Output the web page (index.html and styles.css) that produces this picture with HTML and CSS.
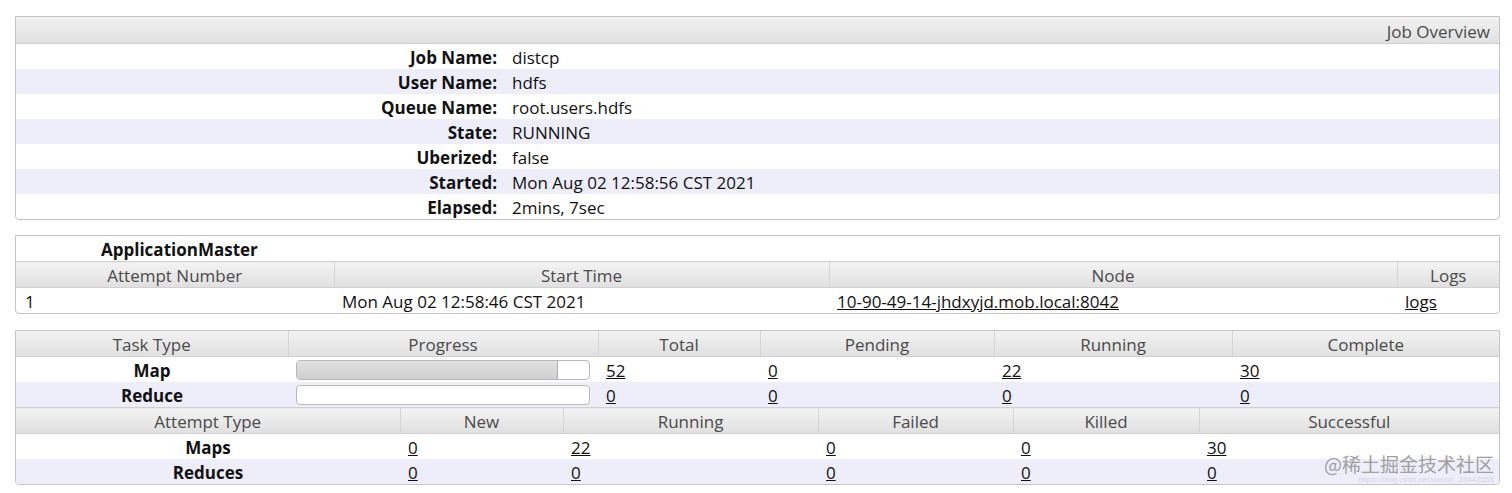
FILE: index.html
```html
<!DOCTYPE html>
<html>
<head>
<meta charset="utf-8">
<link rel="stylesheet" href="styles.css">
</head>
<body>
<div class="page">
  <div class="box first">
    <table class="info">
      <colgroup>
        <col class="i-label"><col class="i-value">
      </colgroup>
      <thead>
        <tr><th colspan="2" class="title">Job Overview</th></tr>
      </thead>
      <tbody>
        <tr><th>Job Name:</th><td>distcp</td></tr>
        <tr class="alt"><th>User Name:</th><td>hdfs</td></tr>
        <tr><th>Queue Name:</th><td>root.users.hdfs</td></tr>
        <tr class="alt"><th>State:</th><td>RUNNING</td></tr>
        <tr><th>Uberized:</th><td>false</td></tr>
        <tr class="alt"><th>Started:</th><td>Mon Aug 02 12:58:56 CST 2021</td></tr>
        <tr><th>Elapsed:</th><td>2mins, 7sec</td></tr>
      </tbody>
    </table>
  </div>

  <div class="box second">
    <div class="am">ApplicationMaster</div>
    <table class="grid am-table">
      <colgroup>
        <col class="c-attempt"><col class="c-start"><col class="c-node"><col class="c-logs">
      </colgroup>
      <thead>
        <tr><th>Attempt Number</th><th>Start Time</th><th>Node</th><th>Logs</th></tr>
      </thead>
      <tbody>
        <tr><td>1</td><td>Mon Aug 02 12:58:46 CST 2021</td><td><a href="#">10-90-49-14-jhdxyjd.mob.local:8042</a></td><td><a href="#">logs</a></td></tr>
      </tbody>
    </table>
  </div>

  <div class="box last">
    <table class="grid tasks">
      <colgroup>
        <col class="t1"><col class="t2"><col class="t3"><col class="t4"><col class="t5"><col class="t6">
      </colgroup>
      <thead>
        <tr><th>Task Type</th><th>Progress</th><th>Total</th><th>Pending</th><th>Running</th><th>Complete</th></tr>
      </thead>
      <tbody>
        <tr>
          <th class="rowname">Map</th>
          <td class="prog"><div class="bar"><div class="fill" style="width:89.5%"></div></div></td>
          <td><a href="#">52</a></td><td><a href="#">0</a></td><td><a href="#">22</a></td><td><a href="#">30</a></td>
        </tr>
        <tr class="alt">
          <th class="rowname">Reduce</th>
          <td class="prog"><div class="bar"><div class="fill empty" style="width:0%"></div></div></td>
          <td><a href="#">0</a></td><td><a href="#">0</a></td><td><a href="#">0</a></td><td><a href="#">0</a></td>
        </tr>
      </tbody>
    </table>
    <table class="grid attempts">
      <colgroup>
        <col class="a1"><col class="a2"><col class="a3"><col class="a4"><col class="a5"><col class="a6">
      </colgroup>
      <thead>
        <tr><th>Attempt Type</th><th>New</th><th>Running</th><th>Failed</th><th>Killed</th><th>Successful</th></tr>
      </thead>
      <tbody>
        <tr>
          <th class="rowname">Maps</th>
          <td><a href="#">0</a></td><td><a href="#">22</a></td><td><a href="#">0</a></td><td><a href="#">0</a></td><td><a href="#">30</a></td>
        </tr>
        <tr class="alt">
          <th class="rowname">Reduces</th>
          <td><a href="#">0</a></td><td><a href="#">0</a></td><td><a href="#">0</a></td><td><a href="#">0</a></td><td><a href="#">0</a></td>
        </tr>
      </tbody>
    </table>
    <div class="watermark">
      <span class="wm-main">@稀土掘金技术社区</span>
      <span class="wm-url">https://blog.csdn.net/weixin_29442555</span>
    </div>
  </div>
</div>
</body>
</html>
```
FILE: styles.css
```css
html, body {
  margin: 0;
  padding: 0;
  background: #ffffff;
}

body {
  font-family: "Open Sans", "Noto Sans", "Noto Sans CJK SC", sans-serif;
  font-size: 17px;
  color: #111111;
}

.page {
  padding: 16px 12px 0 15px;
  display: flex;
  flex-direction: column;
}

.box {
  border: 1px solid #c4c4c4;
  border-radius: 0 0 4px 4px;
  overflow: hidden;
  background: #fff;
}

.box.second {
  margin-top: 15px;
}

.box.last {
  position: relative;
  margin-top: 16px;
}

table {
  width: 100%;
  border-collapse: collapse;
  table-layout: fixed;
}

th, td {
  padding: 2px 0 0 0;
  height: 23px;
  line-height: 23px;
  white-space: nowrap;
  overflow: hidden;
}

tr.alt {
  background: #eeeefb;
}

/* Job overview */
.i-label { width: 496px; }
.i-value { width: auto; }

.info .title {
  height: 24px;
  text-align: right;
  font-weight: normal;
  color: #4a4a4a;
  padding-right: 9px;
  background: linear-gradient(#f2f2f2, #e9e9e9 50%, #e2e2e2);
  border-bottom: 1px solid #cfcfcf;
}

.info tbody th {
  text-align: right;
  font-weight: 700;
  padding-right: 15px;
}

.info tbody td {
  text-align: left;
}

/* Application master */
.am {
  height: 25px;
  line-height: 27px;
  font-weight: 700;
  padding-left: 85px;
}

.grid thead th {
  height: 23px;
  font-weight: normal;
  color: #4a4a4a;
  text-align: center;
  background: linear-gradient(#f3f3f3, #e9e9e9 50%, #e0e0e0);
  border-top: 1px solid #d0d0d0;
  border-bottom: 1px solid #d0d0d0;
  border-left: 1px solid #d6d6d6;
}

.grid thead th:first-child {
  border-left: none;
}

.tasks thead th {
  border-top: none;
}

.grid td {
  text-align: left;
  padding-left: 8px;
}

.grid td a {
  color: #111;
  text-decoration: underline;
}

.am-table td:first-child {
  padding-left: 9px;
}

.c-attempt { width: 318px; }
.c-start { width: 495px; }
.c-node { width: 568px; }
.c-logs { width: auto; }

.t1 { width: 272px; }
.t2 { width: 310px; }
.t3 { width: 162px; }
.t4 { width: 234px; }
.t5 { width: 238px; }
.t6 { width: auto; }

.a1 { width: 384px; }
.a2 { width: 163px; }
.a3 { width: 255px; }
.a4 { width: 195px; }
.a5 { width: 186px; }
.a6 { width: auto; }

.rowname {
  text-align: center;
  font-weight: 700;
}

.prog {
  padding: 0 8px !important;
  height: 25px !important;
}

.bar {
  height: 18px;
  border: 1px solid #b8b8b8;
  border-radius: 4px;
  background: #fff;
  overflow: hidden;
  margin-top: 1px;
}

.fill {
  height: 100%;
  background: linear-gradient(#e0e0e0, #cfcfcf);
  border-right: 1px solid #b0b0b0;
  box-sizing: border-box;
}

.fill.empty {
  border-right: none;
}

.watermark {
  position: absolute;
  right: 5px;
  bottom: 0;
  display: flex;
  flex-direction: column;
  align-items: flex-end;
  gap: 3px;
  line-height: 1;
}

.wm-main {
  font-family: "Noto Sans CJK SC", sans-serif;
  font-size: 19px;
  line-height: 19px;
  color: #a0a0a0;
  white-space: nowrap;
}

.wm-url {
  font-family: "Liberation Sans", sans-serif;
  font-size: 8px;
  line-height: 8px;
  color: rgba(190, 190, 205, 0.55);
  white-space: nowrap;
}
```
